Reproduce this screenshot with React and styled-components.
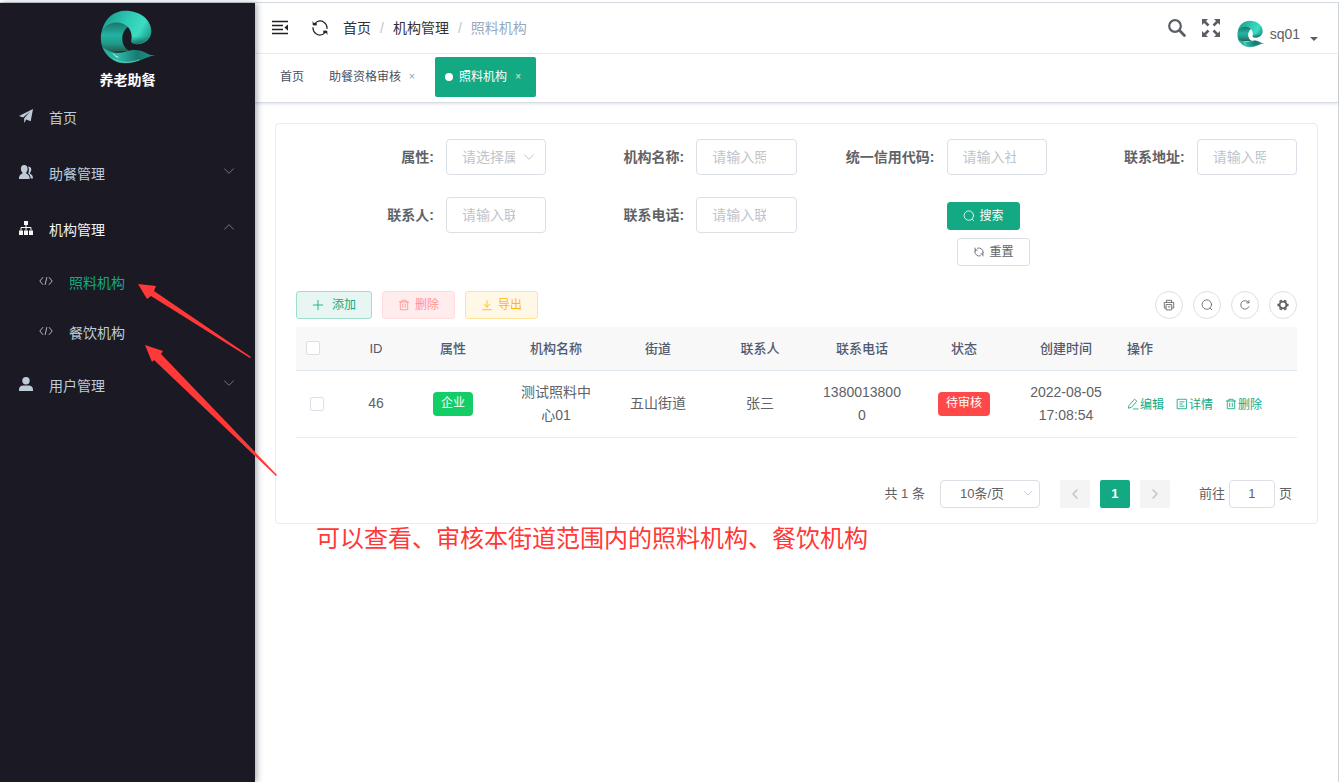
import React from 'react';
import styled, { createGlobalStyle, css } from 'styled-components';

const GlobalStyle = createGlobalStyle`
  * {
    box-sizing: border-box;
  }

  body {
    margin: 0;
    background: #fff;
    color: #606266;
    font-family: 'Liberation Sans', 'Noto Sans CJK SC', sans-serif;
    font-size: 14px;
  }

  button, input, select {
    margin: 0;
    font-family: inherit;
  }

  a {
    color: inherit;
    text-decoration: none;
  }
`;

const green = '#13a983';

/* icons */

const Svg = styled.svg`
  display: block;
  flex: none;
  width: ${p => p.$size || 14}px;
  height: ${p => p.$size || 14}px;
  fill: none;
  stroke: currentColor;
  stroke-width: ${p => p.$stroke || 1};
  stroke-linecap: round;
  stroke-linejoin: round;
`;

const shapes = {
  plane: <path fill="currentColor" stroke="none" d="M14 0 11.700 12.300 7.300 10.400 5.200 14V9.300L11.200 2.600 4 8.600 0 7z" />,
  users: (
    <g fill="currentColor" stroke="none">
      <path d="M5.200 0c2.200 0 3.400 1.500 3.400 3.700 0 1.600-.6 3-1.400 3.700v1.200c1.500.8 3.500 1.500 3.500 5.400H0c0-3.900 1.900-4.600 3.400-5.400V7.400C2.500 6.700 1.900 5.300 1.900 3.700 1.900 1.500 3 0 5.200 0z" />
      <path d="M9 1.500c2 0 3.300 1.100 3.300 3 0 1.400-.5 2.500-1.300 3.200v1c1.500.7 3 1.500 3 4.800h-2.300c-.2-3-1.500-4.300-2.700-4.900 1-1 1.400-5.100 0-7.100z" />
    </g>
  ),
  sitemap: (
    <>
      <path d="M7 4v5M2 9V6.500h10V9" />
      <g fill="currentColor" stroke="none">
        <rect x="5" y="0" width="4" height="4" />
        <rect x="0" y="9.500" width="4" height="4.500" />
        <rect x="5" y="9.500" width="4" height="4.500" />
        <rect x="10" y="9.500" width="4" height="4.500" />
      </g>
    </>
  ),
  code: <path d="M3.800 3.500.8 7l3 3.500M10.200 3.500l3 3.500-3 3.500M7.800 3.500l-1.600 7" />,
  user: (
    <g fill="currentColor" stroke="none">
      <circle cx="7" cy="3.700" r="3.700" />
      <path d="M0 14v-1.500C0 9.800 2 8.600 4.300 8.600h5.400c2.300 0 4.300 1.200 4.300 3.900V14z" />
    </g>
  ),
  down: <path d="M2.500 4.800 7 9.300l4.500-4.500" />,
  up: <path d="M2.500 9.200 7 4.700l4.500 4.500" />,
  left: <path d="M9 3 5 7l4 4" />,
  right: <path d="M5 3l4 4-4 4" />,
  plus: <path d="M7 1.500v11M1.500 7h11" />,
  trash: <path d="M1.500 3.500h11M4.500 3.500v-2h5v2M2.700 3.500v9h8.600v-9M5.500 6v4M8.500 6v4" />,
  download: <path d="M7 2v7.500M3.500 6 7 9.500 10.500 6M2 12.500h10" />,
  search: (
    <>
      <circle cx="6.800" cy="6.500" r="5.500" />
      <path d="m10.700 10.800 1.800 1.800" />
    </>
  ),
  reload: (
    <>
      <path d="M5.300 2.500A4.800 4.800 0 0 1 11.800 7.500M8.700 11.500A4.800 4.800 0 0 1 2.200 6.500" />
      <path d="M2.200 6.500A4.800 4.800 0 0 1 3 4.300M11.800 7.500A4.800 4.800 0 0 1 11 9.700M2.400 2.400v2.400h2.400M11.600 11.600V9.200H9.200" />
    </>
  ),
  refresh: <path d="M11.600 9A5 5 0 1 1 11.300 4.200M11.600 1.800v2.700H8.900" />,
  printer: <path d="M4 4V1.500h6V4M3.500 10.500h-2V4h11v6.500h-2M4 6.500h6.200v6.200H4zM6.200 9.200h2" />,
  gear: (
    <>
      <circle cx="7" cy="7" r="4" strokeWidth="2.200" />
      <path strokeWidth="3.200" strokeLinecap="butt" d="M4.600 2.900 3.800 1.500M9.400 2.900l.8-1.400M11.600 7h1.900M9.400 11.100l.8 1.400M4.600 11.100l-.8 1.400M2.400 7H.5" />
    </>
  ),
  edit: <path d="M2.500 8.500 8.800 1.400l2.700 2.300-6.300 7.200-3.200.9zM7.500 12.800H13" />,
  doc: <path d="M1.800 1.500h10.400v11H1.800zM4.500 4.500h5M4.500 7h3M4.500 9.500h5" />
};

const Icon = ({ name, size, stroke }) => (
  <Svg viewBox="0 0 14 14" $size={size} $stroke={stroke} aria-hidden="true">
    {shapes[name]}
  </Svg>
);

const FoldIcon = () => (
  <Svg viewBox="0 0 16 16" $size={16} $stroke="1.600" aria-hidden="true">
    <path strokeLinecap="butt" d="M0 1.500h16M0 5.500h11M0 9.500h11M0 13.500h16" />
    <path fill="currentColor" stroke="none" d="M16 4.500v6.200L12.400 7.500z" />
  </Svg>
);

const SyncIcon = () => (
  <Svg viewBox="0 0 16 16" $size={16} $stroke="1.200" aria-hidden="true">
    <path d="M5 1.700A7 7 0 0 1 15 8.500M11 14.300A7 7 0 0 1 1 7.500" />
    <path fill="currentColor" stroke="none" d="M.5 1 2 3.200 4.800 1.500 4.600 5.600.8 5.200zM15.500 15 14 12.800l-2.800 1.700.2-4.100 3.800.4z" />
  </Svg>
);

const MagnifierIcon = () => (
  <Svg viewBox="0 0 18 18" $size={18} $stroke="2.200" aria-hidden="true">
    <circle cx="7" cy="7" r="5.800" />
    <path strokeWidth="2.800" d="m11.800 11.800 4.600 4.600" />
  </Svg>
);

const FullscreenIcon = () => (
  <Svg viewBox="0 0 18 18" $size={18} $stroke="2.600" aria-hidden="true">
    <path strokeLinecap="butt" d="M2 2l4.500 4.500M16 2l-4.500 4.500M2 16l4.500-4.500M16 16l-4.500-4.500" />
    <path fill="currentColor" stroke="none" d="M0 0h6L0 6zM18 0v6L12 0zM0 18v-6L6 18zM18 18h-6l6-6z" />
  </Svg>
);

const LogoSvg = styled.svg`
  display: block;
  flex: none;
`;

const Wave = ({ size, id }) => (
  <LogoSvg width={size} height={size} viewBox="12 12 168 168" role="img" aria-label="logo">
    <defs>
      <linearGradient id={`${id}-body`} x1="0" y1="0" x2="0" y2="1">
        <stop offset="0" stopColor="#176f66" />
        <stop offset=".45" stopColor="#23b3a2" />
        <stop offset=".7" stopColor="#1f9c8c" />
        <stop offset="1" stopColor="#265a4e" />
      </linearGradient>
      <linearGradient id={`${id}-top`} x1="0" y1=".3" x2="1" y2=".7">
        <stop offset="0" stopColor="#1e9c8d" />
        <stop offset=".45" stopColor="#2fcbb4" />
        <stop offset=".75" stopColor="#3ddcc2" />
        <stop offset="1" stopColor="#1f9e8e" />
      </linearGradient>
      <linearGradient id={`${id}-shade`} x1="0" y1="0" x2="0" y2="1">
        <stop offset=".55" stopColor="#0d5a52" stopOpacity="0" />
        <stop offset="1" stopColor="#0d5a52" stopOpacity=".8" />
      </linearGradient>
      <linearGradient id={`${id}-tail`} x1="0" y1="0" x2="1" y2="0">
        <stop offset="0" stopColor="#25ad9c" />
        <stop offset=".3" stopColor="#2ab8a6" />
        <stop offset=".65" stopColor="#187b72" />
        <stop offset="1" stopColor="#1f9486" />
      </linearGradient>
    </defs>
    <path fill={`url(#${id}-body)`} d="M24 62C10 86 12 118 26 142l74-4C72 122 72 82 98 64 84 46 50 42 24 62z" />
    <path fill={`url(#${id}-top)`} d="M18 76C26 40 54 17 88 17c46 0 78 28 78 62 0 30-32 45-56 36-6-3-4-8-3-18 0-12-4-23-13-33C74 46 38 48 18 76z" />
    <path fill={`url(#${id}-shade)`} d="M107 64h58c6 38-30 61-55 51-6-3-4-8-3-18z" />
    <path fill={`url(#${id}-tail)`} d="M20 126c24 20 48 20 68 14 26-8 44-6 64 5 8 5 16 6 26 5-32 6-52 25-90 25-32 0-58-20-68-49z" />
    <path fill="none" stroke="#7fdccd" strokeWidth="3" opacity=".7" d="M50 160c24 16 56 14 80 4" />
    <path fill="none" stroke="#e2fff9" strokeWidth="3" d="M52 146c4 5 9 9 15 11" />
  </LogoSvg>
);

/* frame */

const Page = styled.div`
  display: flex;
  flex-direction: column;
  min-height: 100vh;
  padding-top: 2px;
`;

const Frame = styled.div`
  display: flex;
  flex: 1;
  border-top: 1px solid #d5d9e0;
  border-right: 1px solid #cfd3da;
`;

const Sidebar = styled.aside`
  position: relative;
  flex: none;
  width: 255px;
  background: #1b1a24;
  color: #bfcbd9;
  box-shadow: 2px 0 6px rgba(0, 21, 41, 0.35);
`;

const Brand = styled.div`
  display: flex;
  flex-direction: column;
  align-items: center;
  height: 87px;
  padding-top: 6px;
  color: #fff;
  font-weight: 700;
  line-height: 30px;
`;

const MenuLink = styled.a`
  display: flex;
  align-items: center;
  gap: 16px;
  height: ${p => (p.$sub ? 50 : 56)}px;
  padding: 0 19px 0 ${p => (p.$sub ? 39 : 19)}px;
  color: ${p => p.$color || 'inherit'};
  line-height: 24px;

  svg {
    margin-bottom: 4px;
  }

  span {
    flex: 1;
  }

  span ~ svg {
    margin-bottom: 6px;
    color: #73767f;
  }
`;

const SubMenu = styled.div`
  ${MenuLink} > svg {
    color: #b4b7bd;
  }
`;

const Main = styled.main`
  flex: 1;
  min-width: 0;
`;

const TopBar = styled.header`
  display: flex;
  align-items: center;
  height: 51px;
  padding: 0 20px 0 17px;
  border-bottom: 1px solid #f0f1f3;
`;

const IconButton = styled.button`
  display: flex;
  padding: 0;
  border: 0;
  background: none;
  color: ${p => p.$color || '#222'};
  margin-right: ${p => p.$gap}px;
`;

const Crumbs = styled.nav`
  display: flex;
  flex: 1;
  gap: 9px;
  color: #303133;
  line-height: 24px;

  i {
    color: #c0c4cc;
    font-style: normal;
  }

  span {
    color: #97a8be;
  }
`;

const UserMenu = styled.button`
  display: flex;
  align-items: center;
  gap: 5px;
  padding: 12px 0 0;
  border: 0;
  background: none;
  color: #5a5e66;
  font-size: 14px;
`;

const Caret = styled.span`
  margin: 10px 0 0 5px;
  border: 4px solid transparent;
  border-top-color: #5a5e66;
  border-bottom: 0;
`;

const Tabs = styled.nav`
  display: flex;
  gap: 5px;
  padding: 3px 15px 5px;
  border-bottom: 1px solid #d8dce5;
  box-shadow: 0 1px 3px rgba(0, 0, 0, 0.12);
`;

const Tab = styled.a`
  display: flex;
  align-items: center;
  height: 40px;
  padding: 0 10px;
  border-radius: 2px;
  color: #495060;
  font-size: 12px;
  line-height: 20px;

  ${p => p.$active && css`
    background: ${green};
    color: #fff;

    &::before {
      content: '';
      width: 8px;
      height: 8px;
      margin-right: 6px;
      border-radius: 50%;
      background: #fff;
    }
  `}
`;

const TabClose = styled.span`
  width: 16px;
  margin-left: 3px;
  text-align: center;
  font-size: 10px;
  color: ${p => (p.$active ? '#d5f0e8' : '#999da6')};
`;

/* content */

const Card = styled.section`
  margin: 20px 20px 0;
  padding: 15px 20px;
  border: 1px solid #e6ebf5;
  border-radius: 4px;
`;

const SearchForm = styled.form`
  display: grid;
  grid-template-columns: repeat(4, 1fr);
  row-gap: 22px;
  align-items: start;
`;

const Field = styled.div`
  display: flex;

  label {
    width: 150px;
    padding-right: 12px;
    text-align: right;
    font-weight: 700;
    line-height: 36px;
  }
`;

const control = css`
  min-width: 0;
  border: 1px solid #dcdfe6;
  border-radius: 4px;
  background: #fff;
  color: #606266;
  outline: none;
`;

const Input = styled.input`
  ${control}
  flex: 1;
  width: 100px;
  height: 36px;
  padding: 0 30px 0 15px;
  font-size: 14px;

  &::placeholder {
    color: #c0c4cc;
  }
`;

const SelectBox = styled.div`
  position: relative;
  flex: ${p => (p.$small ? 'none' : 1)};
  width: 100px;

  select {
    ${control}
    display: block;
    width: 100%;
    height: ${p => (p.$small ? 28 : 36)}px;
    padding: ${p => (p.$small ? '0 19px' : '0 30px 0 15px')};
    appearance: none;
    color: ${p => (p.$small ? '#606266' : '#c0c4cc')};
    font-size: ${p => (p.$small ? 13 : 14)}px;
  }

  svg {
    position: absolute;
    top: calc(50% - 7px);
    right: ${p => (p.$small ? 6 : 10)}px;
    color: #c0c4cc;
    pointer-events: none;
  }
`;

const FormActions = styled.div`
  display: flex;
  flex-direction: column;
  align-items: flex-start;
  gap: 8px;
  padding: 5px 0 0 150px;

  button + button {
    margin-left: 10px;
  }
`;

const variants = {
  plain: ['#fff', '#dcdfe6', '#606266'],
  primary: [green, green, '#fff'],
  add: ['#e7f6f2', '#a1ddcd', green],
  remove: ['#ffeded', '#ffdbdb', '#ff9292'],
  export: ['#fff8e6', '#ffe399', '#ffba00']
};

const Button = styled.button`
  display: flex;
  align-items: center;
  gap: ${p => (p.$wide ? 8 : 5)}px;
  height: 28px;
  padding: 0 15px;
  border: 1px solid ${p => variants[p.$variant][1]};
  border-radius: 3px;
  background: ${p => variants[p.$variant][0]};
  color: ${p => variants[p.$variant][2]};
  font-size: 12px;
  line-height: 20px;
  white-space: nowrap;
`;

const Toolbar = styled.div`
  display: flex;
  gap: 10px;
  margin: 25px 0 8px;
`;

const Spacer = styled.div`
  flex: 1;
`;

const RoundButton = styled.button`
  display: flex;
  align-items: center;
  justify-content: center;
  width: 28px;
  height: 28px;
  padding: 0;
  border: 1px solid #dcdfe6;
  border-radius: 50%;
  background: #fff;
  color: #606266;
`;

const Table = styled.table`
  width: 100%;
  table-layout: fixed;
  border-collapse: collapse;
  border-bottom: 1px solid #e6ebf5;

  th, td {
    padding: 0 10px;
    text-align: center;
    line-height: 23px;
    word-break: break-all;
  }

  th {
    height: 43px;
    border-bottom: 1px solid #dfe6ec;
    background: #f8f8f9;
    color: #515a6e;
    font-size: 13px;
    font-weight: 500;
  }

  td {
    height: 67px;
  }

  th:first-child {
    text-align: left;
  }

  td:first-child {
    padding: 0 14px;
    text-align: left;
  }

  th:last-child, td:last-child {
    text-align: left;
  }
`;

const Col = styled.col`
  width: ${p => p.$w}px;
`;

const Checkbox = styled.input`
  display: block;
  width: 14px;
  height: 14px;
  margin: 0;
  appearance: none;
  border: 1px solid #dcdfe6;
  border-radius: 2px;
  background: #fff;
`;

const Tag = styled.span`
  display: inline-block;
  height: 24px;
  padding: 0 8px;
  border-radius: 4px;
  background: ${p => p.$color};
  color: #fff;
  font-size: 12px;
  line-height: 22px;
  vertical-align: middle;
`;

const RowActions = styled.div`
  display: flex;
  gap: 12px;
`;

const TextButton = styled.button`
  display: flex;
  align-items: center;
  gap: 1px;
  padding: 0;
  border: 0;
  background: none;
  color: ${green};
  font-size: 12px;
  white-space: nowrap;
`;

const Pagination = styled.div`
  display: flex;
  align-items: center;
  justify-content: flex-end;
  gap: 10px;
  margin-top: 42px;
  padding-right: 5px;
  font-size: 13px;
  line-height: 28px;
`;

const Total = styled.span`
  margin-right: 5px;
`;

const Pages = styled.div`
  display: flex;
  gap: 10px;
  margin: 0 19px 0 10px;
`;

const PageButton = styled.button`
  display: flex;
  align-items: center;
  justify-content: center;
  width: 30px;
  height: 28px;
  padding: 0;
  border: 0;
  border-radius: 2px;
  background: ${p => (p.$active ? green : '#f4f4f5')};
  color: ${p => (p.$active ? '#fff' : '#c0c4cc')};
  font-size: 13px;
  font-weight: 700;
`;

const Jump = styled.label`
  display: flex;
  gap: 4px;

  input {
    ${control}
    width: 46px;
    height: 28px;
    padding: 0;
    text-align: center;
    font-size: 13px;
  }
`;

const Note = styled.p`
  margin: 0;
  padding-left: 61px;
  color: #ff3838;
  font-size: 24px;
  line-height: 30px;
`;

const Arrows = styled.svg`
  position: absolute;
  top: 270px;
  left: 130px;
  pointer-events: none;
`;

const fields = [
  { id: 'name', label: '机构名称:', placeholder: '请输入照料机构名称' },
  { id: 'code', label: '统一信用代码:', placeholder: '请输入社会统一信用代码' },
  { id: 'address', label: '联系地址:', placeholder: '请输入照料机构地址' },
  { id: 'contact', label: '联系人:', placeholder: '请输入联系人' },
  { id: 'phone', label: '联系电话:', placeholder: '请输入联系电话' }
];

const tools = [
  ['printer', '打印'],
  ['search', '搜索'],
  ['refresh', '刷新'],
  ['gear', '设置']
];

const headings = ['ID', '属性', '机构名称', '街道', '联系人', '联系电话', '状态', '创建时间', '操作'];

const rows = [
  {
    id: 46,
    type: '企业',
    name: '测试照料中心01',
    street: '五山街道',
    contact: '张三',
    phone: '13800138000',
    status: '待审核',
    created: '2022-08-05 17:08:54'
  }
];

const SideMenu = () => (
  <Sidebar>
    <Brand>
      <Wave size={56} id="brand" />
      养老助餐
    </Brand>
    <nav>
      <MenuLink href="#home"><Icon name="plane" /><span>首页</span></MenuLink>
      <MenuLink href="#meal"><Icon name="users" /><span>助餐管理</span><Icon name="down" /></MenuLink>
      <MenuLink href="#org" $color="#f4f4f5"><Icon name="sitemap" /><span>机构管理</span><Icon name="up" /></MenuLink>
      <SubMenu>
        <MenuLink href="#care" $sub $color={green}><Icon name="code" /><span>照料机构</span></MenuLink>
        <MenuLink href="#catering" $sub><Icon name="code" /><span>餐饮机构</span></MenuLink>
      </SubMenu>
      <MenuLink href="#user"><Icon name="user" /><span>用户管理</span><Icon name="down" /></MenuLink>
    </nav>
  </Sidebar>
);

const Header = () => (
  <TopBar>
    <IconButton $gap={24} aria-label="收起菜单"><FoldIcon /></IconButton>
    <IconButton $gap={15} aria-label="刷新"><SyncIcon /></IconButton>
    <Crumbs>
      <a href="#home">首页</a><i>/</i>
      <a href="#org">机构管理</a><i>/</i>
      <span>照料机构</span>
    </Crumbs>
    <IconButton $gap={16} $color="#5a5e66" aria-label="搜索"><MagnifierIcon /></IconButton>
    <IconButton $gap={17} $color="#5a5e66" aria-label="全屏"><FullscreenIcon /></IconButton>
    <UserMenu>
      <Wave size={28} id="avatar" />
      sq01
      <Caret />
    </UserMenu>
  </TopBar>
);

const makeRow = row => (
  <tr key={row.id}>
    <td><Checkbox type="checkbox" aria-label={`选择 ${row.id}`} /></td>
    <td>{row.id}</td>
    <td><Tag $color="#13ce66">{row.type}</Tag></td>
    <td>{row.name}</td>
    <td>{row.street}</td>
    <td>{row.contact}</td>
    <td>{row.phone}</td>
    <td><Tag $color="#ff4949">{row.status}</Tag></td>
    <td>{row.created}</td>
    <td>
      <RowActions>
        <TextButton><Icon name="edit" size={12} />编辑</TextButton>
        <TextButton><Icon name="doc" size={12} />详情</TextButton>
        <TextButton><Icon name="trash" size={12} />删除</TextButton>
      </RowActions>
    </td>
  </tr>
);

const App = () => (
  <Page>
    <GlobalStyle />
    <Frame>
      <SideMenu />
      <Main>
        <Header />
        <Tabs>
          <Tab href="#home">首页</Tab>
          <Tab href="#audit">助餐资格审核<TabClose>×</TabClose></Tab>
          <Tab href="#care" $active>照料机构<TabClose $active>×</TabClose></Tab>
        </Tabs>

        <Card>
          <SearchForm onSubmit={e => e.preventDefault()}>
            <Field>
              <label htmlFor="type">属性:</label>
              <SelectBox>
                <select id="type"><option>请选择属性</option></select>
                <Icon name="down" />
              </SelectBox>
            </Field>
            {fields.map(f => (
              <Field key={f.id}>
                <label htmlFor={f.id}>{f.label}</label>
                <Input id={f.id} placeholder={f.placeholder} />
              </Field>
            ))}
            <FormActions>
              <Button $variant="primary"><Icon name="search" size={12} />搜索</Button>
              <Button $variant="plain" type="reset"><Icon name="reload" size={12} />重置</Button>
            </FormActions>
          </SearchForm>

          <Toolbar>
            <Button $variant="add" $wide><Icon name="plus" size={12} />添加</Button>
            <Button $variant="remove"><Icon name="trash" size={12} />删除</Button>
            <Button $variant="export"><Icon name="download" size={12} />导出</Button>
            <Spacer />
            {tools.map(([icon, label]) => (
              <RoundButton key={icon} aria-label={label}><Icon name={icon} size={12} /></RoundButton>
            ))}
          </Toolbar>

          <Table>
            <colgroup>
              <Col $w={55} />
              <Col $w={50} />
              <Col $w={104} />
              <col span="6" />
              <Col $w={180} />
            </colgroup>
            <thead>
              <tr>
                <th><Checkbox type="checkbox" aria-label="全选" /></th>
                {headings.map(h => <th key={h}>{h}</th>)}
              </tr>
            </thead>
            <tbody>{rows.map(makeRow)}</tbody>
          </Table>

          <Pagination>
            <Total>共 1 条</Total>
            <SelectBox $small>
              <select aria-label="每页条数"><option>10条/页</option></select>
              <Icon name="down" size={12} />
            </SelectBox>
            <Pages>
              <PageButton aria-label="上一页"><Icon name="left" stroke="1.500" /></PageButton>
              <PageButton $active>1</PageButton>
              <PageButton aria-label="下一页"><Icon name="right" stroke="1.500" /></PageButton>
            </Pages>
            <Jump>前往<input defaultValue="1" />页</Jump>
          </Pagination>
        </Card>
        <Note>可以查看、审核本街道范围内的照料机构、餐饮机构</Note>
      </Main>
    </Frame>
    <Arrows width="150" height="210" viewBox="130 270 150 210" fill="#ff3838" aria-hidden="true">
      <path d="M138 284 156 286 154 291 251 357 250 358 151 296 147 299z" />
      <path d="M145 345 163 351 161 354 277 475 276 476 154 360 152 362z" />
    </Arrows>
  </Page>
);

export default App;
